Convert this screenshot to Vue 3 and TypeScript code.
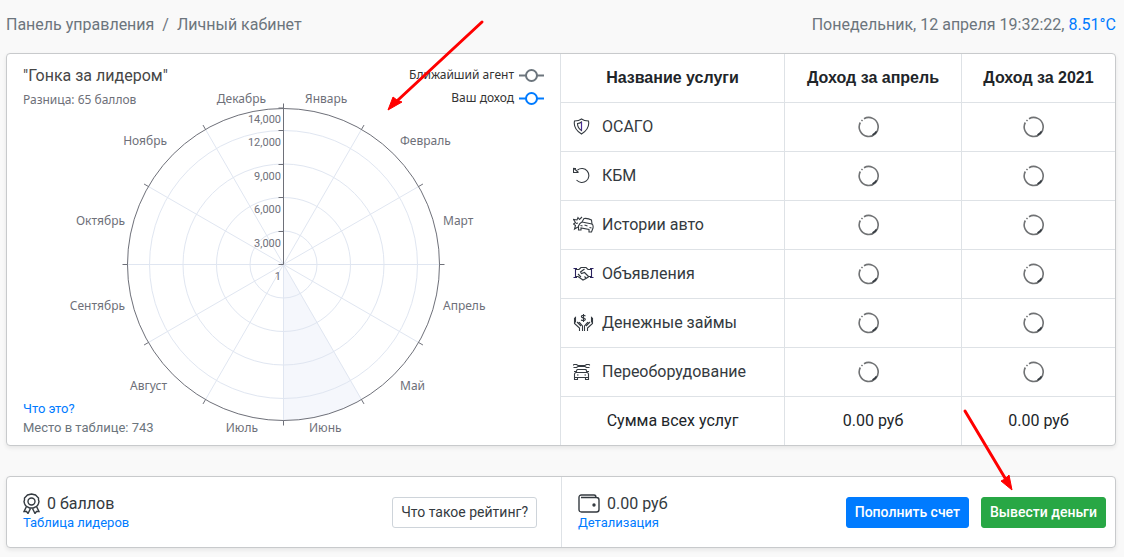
<script setup lang="ts">
interface MonthLabel {
  name: string
  x: number
  y: number
  anchor: 'start' | 'end'
}

const cx = 276.5
const cy = 210.5
const radius = 156

const point = (index: number, r: number) => {
  const a = (index * Math.PI) / 6
  return { x: cx + r * Math.sin(a), y: cy - r * Math.cos(a) }
}

const spokes = Array.from({ length: 12 }, (_, i) => ({
  inner: point(i, radius),
  outer: point(i, radius + 5),
}))

const rings = [33.5, 67, 100.5, 134]

const axisTicks = [
  { label: '14,000', y: 54 },
  { label: '12,000', y: 76.5 },
  { label: '9,000', y: 110.5 },
  { label: '6,000', y: 143.5 },
  { label: '3,000', y: 177.5 },
  { label: '1', y: 210.5 },
]

const months: MonthLabel[] = [
  { name: 'Январь', x: 298, y: 49, anchor: 'start' },
  { name: 'Февраль', x: 393, y: 91, anchor: 'start' },
  { name: 'Март', x: 436, y: 171, anchor: 'start' },
  { name: 'Апрель', x: 436, y: 256, anchor: 'start' },
  { name: 'Май', x: 393, y: 336, anchor: 'start' },
  { name: 'Июнь', x: 302, y: 378, anchor: 'start' },
  { name: 'Июль', x: 251, y: 378, anchor: 'end' },
  { name: 'Август', x: 160, y: 336, anchor: 'end' },
  { name: 'Сентябрь', x: 118, y: 256, anchor: 'end' },
  { name: 'Октябрь', x: 118, y: 171, anchor: 'end' },
  { name: 'Ноябрь', x: 160, y: 91, anchor: 'end' },
  { name: 'Декабрь', x: 259, y: 49, anchor: 'end' },
]

const p5 = point(5, radius)
const sector = `M${cx} ${cy}L${p5.x} ${p5.y}A${radius} ${radius} 0 0 1 ${cx} ${cy + radius}Z`

const services = [
  { id: 'shield', name: 'ОСАГО' },
  { id: 'undo', name: 'КБМ' },
  { id: 'crash', name: 'Истории авто' },
  { id: 'hands', name: 'Объявления' },
  { id: 'loan', name: 'Денежные займы' },
  { id: 'tuning', name: 'Переоборудование' },
]
</script>

<template>
  <div class="page">
    <header class="topbar">
      <nav class="crumbs" aria-label="Навигация">
        <span>Панель управления</span><span class="slash">/</span><span>Личный кабинет</span>
      </nav>
      <div class="clock">Понедельник, 12 апреля 19:32:22, <span class="temp">8.51°C</span></div>
    </header>

    <section class="card overview">
      <div class="race">
        <svg class="chart" viewBox="0 0 553 391" role="img" aria-label="Гонка за лидером">
          <path :d="sector" fill="#f5f7fc" />
          <g fill="none" stroke="#e0e6f1">
            <circle v-for="r in rings" :key="r" :cx="cx" :cy="cy" :r="r" />
            <line v-for="(s, i) in spokes" :key="i" :x1="cx" :y1="cy" :x2="s.inner.x" :y2="s.inner.y" />
          </g>
          <g fill="none" stroke="#6e7079">
            <circle :cx="cx" :cy="cy" :r="radius" />
            <line v-for="(s, i) in spokes" :key="i" :x1="s.inner.x" :y1="s.inner.y" :x2="s.outer.x" :y2="s.outer.y" />
            <line :x1="cx" :y1="cy" :x2="cx" :y2="cy - radius" />
            <line v-for="t in axisTicks" :key="t.label" :x1="cx - 5" :y1="t.y" :x2="cx" :y2="t.y" />
          </g>
          <g class="axis">
            <text v-for="t in axisTicks" :key="t.label" x="274" :y="t.y + 15" text-anchor="end">{{ t.label }}</text>
          </g>
          <g class="months">
            <text v-for="m in months" :key="m.name" :x="m.x" :y="m.y" :text-anchor="m.anchor">{{ m.name }}</text>
          </g>
          <g class="legend">
            <text x="507" y="25" text-anchor="end">Ближайший агент</text>
            <text x="507" y="48" text-anchor="end">Ваш доход</text>
          </g>
          <g fill="#fff" stroke-width="2">
            <path d="M512 21.500H537" stroke="#6c757d" />
            <circle cx="524.500" cy="21.500" r="5.500" stroke="#6c757d" />
            <path d="M512 44.500H537" stroke="#007bff" />
            <circle cx="524.500" cy="44.500" r="5.500" stroke="#007bff" />
          </g>
        </svg>
        <div class="notes">
          <div>
            <div class="title">"Гонка за лидером"</div>
            <div class="subtitle">Разница: 65 баллов</div>
          </div>
          <div class="place">
            <a href="#">Что это?</a>
            <div>Место в таблице: 743</div>
          </div>
        </div>
      </div>

      <table class="income">
        <thead>
          <tr>
            <th scope="col" class="c1">Название услуги</th>
            <th scope="col" class="c2">Доход за апрель</th>
            <th scope="col">Доход за 2021</th>
          </tr>
        </thead>
        <tbody>
          <tr v-for="s in services" :key="s.id">
            <td>
              <div class="service">
                <svg class="icon" viewBox="0 0 21 18" aria-hidden="true">
                  <g v-if="s.id === 'shield'">
                    <path d="M8.500 1Q6 3 1.500 3Q0 11 8.500 16Q17 11 15.500 3Q11 3 8.500 1Z" />
                    <path d="M8.500 4Q6.500 5.500 4.500 5.500Q4.500 10 8.500 12.500Z" />
                    <path d="M8.500 4V12.500" stroke="#4b2b9a" />
                  </g>
                  <g v-else-if="s.id === 'undo'">
                    <path d="M4.500 3A7 7 0 1 1 3.500 13M.500 1V5.500H5.500M.500 1L5.500 5.500M.500 1.500H3" />
                  </g>
                  <g v-else-if="s.id === 'crash'">
                    <path d="M7 7.500L9 6L11 2.500Q15 2 18.500 4L19 8Q20.500 9 20 12L18.500 16H16V13.500L8 12V14H5.500V10Z" />
                    <path d="M9 6L19 8M7.500 9.500L9.500 10M16.500 11.500L18.500 12M11.500 9L14.500 10M5 7L3 7.500M5 11L1.500 13L2.500 9.500L.500 8L2.500 6.500L.500 3.500L4 4L5 1.500L6.500 3.500L9 1" />
                  </g>
                  <g v-else-if="s.id === 'hands'">
                    <path d="M.500 3.500H4M2.500 3.500V12.500M.500 12.500H4M17 3.500H20.500M18.500 3.500V12.500M17 12.500H20.500" stroke="#2b2360" />
                    <path d="M3 4.500H6L8 2.500H13L15 4.500H18M3 11.500H5L10 15L13 13.500L16 11.500H18M11.500 4L7.500 7L8.500 8.500L11.500 7.500L15.500 11.500M5 9L8 12M11.500 11.500L13 13" />
                  </g>
                  <g v-else-if="s.id === 'loan'">
                    <path d="M1.500 4V9.500L6.500 14V17M4 8L8 12M1.500 4.500L2.500 3.500V8.500M5 9.500L6.500 8.500L9.500 12V17M19.500 4V9.500L14.500 14V17M17 8L13 12M19.500 4.500L18.500 3.500V8.500M16 9.500L14.500 8.500L11.500 12V17" />
                    <path d="M12.500 2Q10 .500 8.500 2Q8 3.500 10.500 4Q13 4.500 12 6Q10 7 8 6M10.500 0V8" />
                  </g>
                  <g v-else>
                    <path d="M.500 1.500H3.500L5 2.500H12L13.500 1.500H16.500M.500 4.500H3.500L5 3.500H12L13.500 4.500H16.500M.500 1.500V2.500M16.500 1.500V2.500" />
                    <path d="M4 6.500H13L14 9.500H3L4 6.500M2.500 9.500L1.500 11V16.500H4.500V14.500H12.500V16.500H15.500V11L14.500 9.500M1 8.500H3M14 8.500H16M4 12H5.500M11.500 12H13M1.500 14.500H15.500" />
                  </g>
                </svg>
                <span>{{ s.name }}</span>
              </div>
            </td>
            <td v-for="n in 2" :key="n" class="num">
              <svg class="spinner" viewBox="0 0 22 22" role="img" aria-label="Загрузка">
                <path d="M6 2.700A9.500 9.500 0 1 1 2.300 6.500M3.500 5L4.500 4" fill="none" stroke="#707274" stroke-width="1.600" />
                <path d="M18.500 15.500A9.500 9.500 0 0 1 14.500 19" fill="none" stroke="#343a40" stroke-width="1.600" />
              </svg>
            </td>
          </tr>
        </tbody>
        <tfoot>
          <tr>
            <td class="num">Сумма всех услуг</td>
            <td class="num">0.00 руб</td>
            <td class="num">0.00 руб</td>
          </tr>
        </tfoot>
      </table>
    </section>

    <section class="card balance">
      <div class="half">
        <div>
          <div class="amount">
            <svg class="award" viewBox="0 0 17 21" aria-hidden="true">
              <path d="M8.500 1L10.500 1.500L12.500 2L14 3.500L15.500 5L15.500 7L16 8.500L15.500 10.500L14.500 12.500L12.500 14L10.500 15H6.500L4.500 14L2.500 12.500L1.500 10.500L1 8.500L1.500 7L1.500 5L3 3.500L4.500 2L6.500 1.500Z" />
              <circle cx="8.500" cy="8.500" r="3.500" />
              <path d="M3.500 13.500L1 18.500L3.500 18.500L5 20.500L7.500 15.500M13.500 13.500L16 18.500L13.500 18.500L12 20.500L9.500 15.500" />
            </svg>
            <span>0 баллов</span>
          </div>
          <a href="#">Таблица лидеров</a>
        </div>
        <button type="button" class="btn outline">Что такое рейтинг?</button>
      </div>
      <div class="half">
        <div>
          <div class="amount">
            <svg class="wallet" viewBox="0 0 22 19" aria-hidden="true">
              <path d="M4 3.500H18.500Q21 3.500 21 6V15.500Q21 18 18.500 18H3.500Q1 18 1 15.500V3.500Q1 1 3.500 1H16Q18 1 18 3.500M4 3.500H3" />
              <circle cx="16" cy="11" r="1" fill="#343a40" />
            </svg>
            <span>0.00 руб</span>
          </div>
          <a href="#">Детализация</a>
        </div>
        <div class="actions">
          <button type="button" class="btn blue">Пополнить счет</button>
          <button type="button" class="btn green">Вывести деньги</button>
        </div>
      </div>
    </section>

    <svg class="arrows" viewBox="0 0 1124 557" aria-hidden="true">
      <g stroke="#f00" stroke-width="3" stroke-linecap="round">
        <path d="M482 22L398 100" />
        <path d="M965 411L1005 478" />
      </g>
      <path d="M388 110L393 97L397 100L402 102ZM1012 490L1001 481L1005 479L1009 475Z" fill="#f00" stroke="#f00" />
    </svg>
  </div>
</template>

<style>
body {
  margin: 0;
  background: #f9f9f9;
}
</style>

<style scoped>
.page {
  position: relative;
  padding: 13px 8px 8px 6px;
  font-family: Roboto, "Liberation Sans", sans-serif;
  font-size: 16px;
  line-height: 24px;
  color: #212529;
}
.topbar {
  display: flex;
  justify-content: space-between;
  color: #6c757d;
  margin-bottom: 16px;
}
.slash {
  padding: 0 8px;
}
.temp,
a {
  color: #007bff;
}
a {
  text-decoration: none;
  font-size: 13px;
  line-height: 20px;
}
.card {
  display: grid;
  background: #fff;
  border: 1px solid #c8cacc;
  border-radius: 4px;
  box-shadow: 0 2px 4px rgba(0, 0, 0, 0.08);
}
.overview {
  grid-template-columns: 553fr 555fr;
  margin-bottom: 30px;
}
.race {
  display: grid;
}
.race > * {
  grid-area: 1 / 1;
}
.chart {
  display: block;
  width: 100%;
}
.chart text {
  font-family: "Noto Sans", "Open Sans", sans-serif;
  font-size: 12px;
  fill: #6e7079;
}
.chart .axis text {
  font-family: Roboto, sans-serif;
  font-size: 11px;
}
.chart .legend text {
  fill: #333;
}
.notes {
  display: flex;
  flex-direction: column;
  justify-content: space-between;
  justify-self: start;
  padding: 10px 16px 8px;
}
.title {
  color: #464646;
}
.subtitle {
  font-family: "Noto Sans", "Open Sans", sans-serif;
  font-size: 12px;
  color: #6e7079;
}
.place {
  font-size: 13px;
  line-height: 18px;
  color: #6c757d;
}
.income {
  width: 100%;
  border-spacing: 0;
  table-layout: fixed;
}
.c1 {
  width: 224px;
}
.c2 {
  width: 177px;
}
.income th,
.income td {
  box-sizing: border-box;
  height: 49px;
  padding: 0 12px;
  border-left: 1px solid #dee2e6;
  border-bottom: 1px solid #dee2e6;
}
.income th {
  font-family: "Liberation Sans", sans-serif;
  font-weight: 700;
}
.income tfoot td {
  height: 48px;
  border-bottom: 0;
}
.num {
  text-align: center;
}
.service {
  display: flex;
  align-items: center;
  gap: 8px;
  color: #343a40;
}
.icon {
  width: 21px;
  height: 18px;
  fill: none;
  stroke: #343a40;
  stroke-width: 1.1;
}
.spinner {
  display: block;
  width: 22px;
  height: 22px;
  margin: 0 auto;
  padding: 0 9px 1px 0;
}
.half {
  display: flex;
  justify-content: space-between;
  align-items: center;
  padding: 16px 9px 15px 16px;
}
.balance {
  grid-template-columns: 1fr 1fr;
}
.half:first-child {
  padding-right: 24px;
}
.half + .half {
  border-left: 1px solid #dee2e6;
}
.half a {
  display: block;
  line-height: 18px;
}
.amount {
  display: flex;
  align-items: center;
  gap: 7px;
  line-height: 21px;
  color: #343a40;
}
.amount svg {
  fill: none;
  stroke: #343a40;
  stroke-width: 1.4;
}
.award {
  width: 17px;
  height: 21px;
}
.wallet {
  width: 22px;
  height: 19px;
}
.actions {
  display: flex;
  gap: 12px;
}
.btn {
  height: 31px;
  padding: 0 8px;
  border: 1px solid;
  border-radius: 3px;
  font-family: inherit;
  font-size: 14px;
  font-weight: 500;
  line-height: 21px;
  color: #fff;
}
.outline {
  background: #fff;
  border-color: #ced4da;
  color: #343a40;
  font-weight: 400;
}
.blue {
  background: #007bff;
  border-color: #007bff;
}
.green {
  background: #28a745;
  border-color: #28a745;
}
.arrows {
  position: absolute;
  top: 0;
  left: 0;
  width: 100%;
  pointer-events: none;
}
</style>
